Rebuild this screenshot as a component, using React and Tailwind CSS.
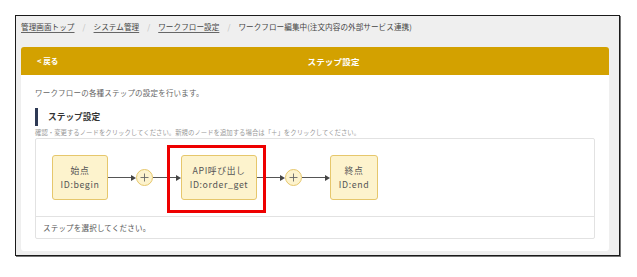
import React from "react";

const font = { fontFamily: '"Noto Sans CJK JP", "Noto Sans", sans-serif' };

function Node({ title, id, highlight }) {
  return (
    <div className="relative">
      <div className="flex h-[45px] flex-col items-center justify-center rounded-[3px] border border-[#e6c76c] bg-[#fdf3cd] text-[8.8px] leading-[14px] tracking-[0.6px] text-[#555]">
        <div>{title}</div>
        <div>{id}</div>
      </div>
      {highlight && (
        <div className="pointer-events-none absolute -left-[14px] -right-[9px] -top-[10px] -bottom-[13px] border-[3px] border-[#ee0000]" />
      )}
    </div>
  );
}

function Connector() {
  return (
    <div className="flex w-[28px] items-center">
      <div className="h-px flex-1 bg-[#555]" />
      <div className="h-0 w-0 border-y-[3px] border-l-[5px] border-y-transparent border-l-[#444]" />
    </div>
  );
}

function Plus() {
  return (
    <div className="flex h-[17px] w-[17px] items-center justify-center rounded-full border border-[#e6c76c] bg-[#fdf3cd]">
      <svg width="9" height="9" viewBox="0 0 9 9">
        <path d="M4.5 0.5v8M0.5 4.5h8" stroke="#666" strokeWidth="0.9" fill="none" />
      </svg>
    </div>
  );
}

export default function App() {
  return (
    <div className="h-[277px] w-[637px] bg-white pt-[15px] pl-[15px]" style={font}>
      <div className="h-[241px] w-[605px] border border-[#1a1a1a] bg-[#efefef] pl-[5px] pr-[10px] shadow-[1px_1px_0_#777]">
        <div className="flex h-[22px] items-center text-[7.6px] tracking-[0.05px] text-[#444]">
          <span className="underline decoration-[#666] underline-offset-2">管理画面トップ</span>
          <span className="px-[8px] text-[#bbb]">/</span>
          <span className="underline decoration-[#666] underline-offset-2">システム管理</span>
          <span className="px-[8px] text-[#bbb]">/</span>
          <span className="underline decoration-[#666] underline-offset-2">ワークフロー設定</span>
          <span className="px-[8px] text-[#bbb]">/</span>
          <span>ワークフロー編集中(注文内容の外部サービス連携)</span>
        </div>
        <div className="mt-[9px] flex h-[28px] items-center rounded-t-[3px] bg-[#d3a100] text-white">
          <div className="pl-[16px] text-[7.5px] font-bold">&lt; 戻る</div>
          <div className="flex-1 text-center text-[8.5px] font-bold tracking-[0.2px]">ステップ設定</div>
        </div>
        <div className="h-[176px] rounded-b-[3px] bg-white px-[14px] pt-[12px]">
          <div className="h-[12px] text-[7.5px] leading-[12px] tracking-[0.2px] text-[#666]">
            ワークフローの各種ステップの設定を行います。
          </div>
          <div className="mt-[9px] flex h-[18px] items-center border-l-[3px] border-[#2e3a55] pl-[10px] text-[8.7px] font-bold text-[#333]">
            ステップ設定
          </div>
          <div className="mt-[2px] h-[10px] text-[6.4px] leading-[10px] text-[#999]">
            確認・変更するノードをクリックしてください。新規のノードを追加する場合は「＋」をクリックしてください。
          </div>
          <div className="rounded-[2px] border border-[#e2e2e2]">
            <div className="flex items-center border-b border-[#e2e2e2] px-[16px] py-[16px]">
              <div className="w-[56px]">
                <Node title="始点" id="ID:begin" />
              </div>
              <Connector />
              <Plus />
              <Connector />
              <div className="w-[76px]">
                <Node title="API呼び出し" id="ID:order_get" highlight />
              </div>
              <Connector />
              <Plus />
              <Connector />
              <div className="w-[48px]">
                <Node title="終点" id="ID:end" />
              </div>
            </div>
            <div className="flex h-[21px] items-center pl-[7px] text-[7.5px] tracking-[0.2px] text-[#555]">
              ステップを選択してください。
            </div>
          </div>
        </div>
      </div>
    </div>
  );
}
